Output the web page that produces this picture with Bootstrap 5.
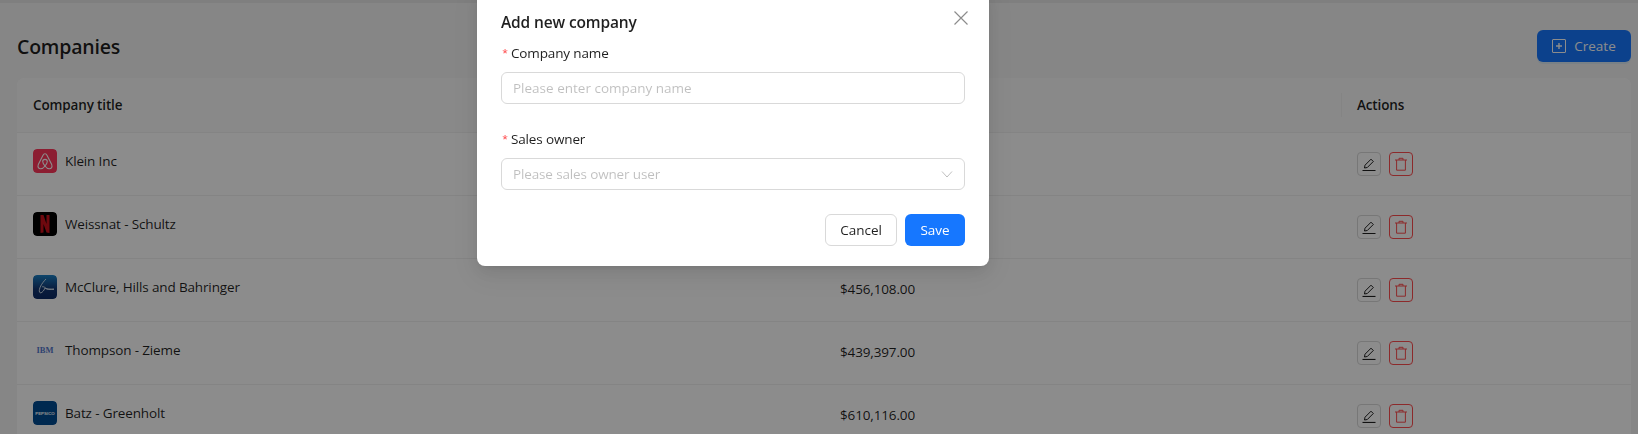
<!doctype html>
<html lang="en">
<head>
<meta charset="utf-8">
<title>Companies</title>
<link rel="stylesheet" href="https://cdn.jsdelivr.net/npm/bootstrap@5.3.0/dist/css/bootstrap.min.css">
<style>
html,body{height:434px;overflow:hidden}
body{background:#f5f5f5;font-family:"Open Sans","Noto Sans",sans-serif;font-size:13.5px;color:rgba(0,0,0,.88);letter-spacing:-.14px}
.page-wrap{padding:30px 7px 0 17px;height:434px;box-shadow:inset 0 3px 0 rgba(0,0,0,.05)}
.page-head{height:32px;margin-bottom:16px}
.page-title{font-size:19.5px;font-weight:600;margin:2px 0 0;line-height:32px;letter-spacing:-.2px}
.create-btn{width:94px;height:32px;background:#1677ff;color:#fff;border:0;border-radius:6px;font-size:13.5px;padding:0;box-shadow:0 2px 0 rgba(5,145,255,.1)}
.panel-box{background:#fff;border-radius:8px 8px 0 0;overflow:hidden}
.co-table{table-layout:fixed;width:100%;margin:0;font-size:13.5px}
.co-table>thead>tr>th{height:54px;background:#fafafa;font-weight:600;padding:0 16px;vertical-align:middle;border-bottom:1px solid #f0f0f0;position:relative;color:rgba(0,0,0,.88)}
.co-table>tbody>tr>td{height:63px;padding:0 16px;vertical-align:middle;border-bottom:1px solid #f0f0f0;color:rgba(0,0,0,.88);background:#fff}
.col-sep::before{content:"";position:absolute;left:0;top:15px;height:24px;width:1px;background:#f0f0f0}
.w-co{width:807px}.w-amt{width:517px}
.co-cell{margin-top:-5px}
.logo-box{width:24px;height:24px;border-radius:4px;flex:none;display:block}
.act-btn{width:24px;height:24px;padding:0;border-radius:4px;border:1px solid #d9d9d9;background:#fff;color:rgba(0,0,0,.88)}
.act-del{border-color:#ff4d4f;color:#ff4d4f}
.veil{position:fixed;inset:0;background:rgba(0,0,0,.45);z-index:10}
.dlg{position:fixed;left:477px;top:-16px;width:512px;height:282px;background:#fff;border-radius:8px;z-index:11;padding:16px 24px 20px;box-shadow:0 6px 16px rgba(0,0,0,.08),0 3px 6px -4px rgba(0,0,0,.12),0 9px 28px 8px rgba(0,0,0,.05)}
.dlg-title{font-size:15.5px;font-weight:600;line-height:22px;margin:11px 0 9px;color:rgba(0,0,0,.88)}
.dlg-close{position:absolute;right:18px;top:23px;width:20px;height:20px;padding:0;border:0;background:none;color:rgba(0,0,0,.45)}
.fld-label{display:block;height:22px;line-height:22px;margin-bottom:8px}
.fld-label-b{margin-top:-1px;margin-bottom:8px}
.req-mark{color:#ff4d4f;font-family:"Liberation Mono",monospace;margin-right:2px}
.fld-input{height:32px;border:1px solid #d9d9d9;border-radius:6px;padding:0 11px;font-size:13.5px;color:rgba(0,0,0,.88);box-shadow:none}
.fld-input::placeholder{color:rgba(0,0,0,.25)}
.fld-group{margin-bottom:25px}
.fld-select{height:32px;border:1px solid #d9d9d9;border-radius:6px;padding:0 11px;color:rgba(0,0,0,.25);background:#fff}
.dlg-foot{margin-top:24px}
.btn-cancel{width:72px;height:32px;padding:0;border:1px solid #d9d9d9;border-radius:6px;background:#fff;color:rgba(0,0,0,.88);font-size:13.5px}
.btn-save{width:60px;height:32px;padding:0;border:0;border-radius:6px;background:#1677ff;color:#fff;font-size:13.5px}
</style>
</head>
<body>
<main class="page-wrap">
  <div class="page-head d-flex justify-content-between align-items-center">
    <h1 class="page-title">Companies</h1>
    <button type="button" class="create-btn d-inline-flex align-items-center justify-content-center gap-2">
      <svg width="14" height="14" viewBox="0 0 14 14" fill="none" stroke="currentColor"><rect x=".5" y=".5" width="13" height="13" rx=".5"/><path d="M7 4v6M4 7h6" stroke-width="1.4"/></svg>
      Create
    </button>
  </div>
  <div class="panel-box">
    <table class="table co-table">
      <colgroup><col class="w-co"><col class="w-amt"><col></colgroup>
      <thead>
        <tr><th>Company title</th><th class="col-sep"></th><th class="col-sep">Actions</th></tr>
      </thead>
      <tbody>
        <tr>
          <td><div class="co-cell d-flex align-items-center gap-2">
            <svg class="logo-box" viewBox="0 0 24 24"><rect width="24" height="24" rx="4" fill="#ff385c"/><path d="M12 4.800c-1 0-1.600.7-2.100 1.700L5.300 15.600c-1 2.400.4 4.200 2.400 4.200 1.600 0 3-1 4.300-2.800 1.300 1.800 2.700 2.800 4.300 2.800 2 0 3.400-1.800 2.400-4.200L14.100 6.500C13.600 5.500 13 4.800 12 4.800zM12 17c-1.500-1.900-2.300-3.300-2.300-4.400 0-1.300 1-2.200 2.300-2.200s2.300.9 2.300 2.200c0 1.100-.8 2.500-2.300 4.400z" fill="none" stroke="#fff" stroke-width="1.100"/></svg>
            <span>Klein Inc</span></div></td>
          <td></td>
          <td><div class="d-flex gap-2">
            <button type="button" class="act-btn d-flex align-items-center justify-content-center" aria-label="Edit"><svg width="14" height="14" viewBox="0 0 14 14" fill="none" stroke="currentColor"><path d="M.5 13.500h13" stroke-width="1.200"/><path d="M2.500 11 3 8.200 9 2.200 11.300 4.500 5.300 10.500z"/></svg></button>
            <button type="button" class="act-btn act-del d-flex align-items-center justify-content-center" aria-label="Delete"><svg width="14" height="14" viewBox="0 0 14 14" fill="none" stroke="currentColor"><path d="M1 3h12M5 3V1.300h4V3M2.600 3v10.200h8.800V3"/></svg></button>
          </div></td>
        </tr>
        <tr>
          <td><div class="co-cell d-flex align-items-center gap-2">
            <svg class="logo-box" viewBox="0 0 24 24"><rect width="24" height="24" rx="4" fill="#000"/><path d="M7.500 3h3L13.500 12V3h3v18l-3-.5L10.500 12v8.500l-3 .5z" fill="#c8101a"/></svg>
            <span>Weissnat - Schultz</span></div></td>
          <td></td>
          <td><div class="d-flex gap-2">
            <button type="button" class="act-btn d-flex align-items-center justify-content-center" aria-label="Edit"><svg width="14" height="14" viewBox="0 0 14 14" fill="none" stroke="currentColor"><path d="M.5 13.500h13" stroke-width="1.200"/><path d="M2.500 11 3 8.200 9 2.200 11.300 4.500 5.300 10.500z"/></svg></button>
            <button type="button" class="act-btn act-del d-flex align-items-center justify-content-center" aria-label="Delete"><svg width="14" height="14" viewBox="0 0 14 14" fill="none" stroke="currentColor"><path d="M1 3h12M5 3V1.300h4V3M2.600 3v10.200h8.800V3"/></svg></button>
          </div></td>
        </tr>
        <tr>
          <td><div class="co-cell d-flex align-items-center gap-2">
            <svg class="logo-box" viewBox="0 0 24 24"><defs><linearGradient id="bg1" x1="0" y1="0" x2="0" y2="1"><stop offset="0" stop-color="#1a7fc4"/><stop offset=".6" stop-color="#12346f"/><stop offset="1" stop-color="#0b2a66"/></linearGradient></defs><rect width="24" height="24" rx="4" fill="url(#bg1)"/><path d="M13 4C8.500 8.500 5.500 14 6.500 17c1 2.500 4.500-1 5.500-4 1.500 1.800 5 1.200 9 1.200-3.500.1-7 .2-8.500-1.200-1.500-1.500-3-1.500-3.500-1" fill="none" stroke="#dce8f2" stroke-width=".9"/></svg>
            <span>McClure, Hills and Bahringer</span></div></td>
          <td>$456,108.00</td>
          <td><div class="d-flex gap-2">
            <button type="button" class="act-btn d-flex align-items-center justify-content-center" aria-label="Edit"><svg width="14" height="14" viewBox="0 0 14 14" fill="none" stroke="currentColor"><path d="M.5 13.500h13" stroke-width="1.200"/><path d="M2.500 11 3 8.200 9 2.200 11.300 4.500 5.300 10.500z"/></svg></button>
            <button type="button" class="act-btn act-del d-flex align-items-center justify-content-center" aria-label="Delete"><svg width="14" height="14" viewBox="0 0 14 14" fill="none" stroke="currentColor"><path d="M1 3h12M5 3V1.300h4V3M2.600 3v10.200h8.800V3"/></svg></button>
          </div></td>
        </tr>
        <tr>
          <td><div class="co-cell d-flex align-items-center gap-2">
            <svg class="logo-box" viewBox="0 0 24 24"><rect width="24" height="24" rx="4" fill="#fff"/><text x="12" y="15" text-anchor="middle" font-family="'Liberation Serif',serif" font-weight="700" font-size="8.500" fill="#5578cc" letter-spacing="0">IBM</text></svg>
            <span>Thompson - Zieme</span></div></td>
          <td>$439,397.00</td>
          <td><div class="d-flex gap-2">
            <button type="button" class="act-btn d-flex align-items-center justify-content-center" aria-label="Edit"><svg width="14" height="14" viewBox="0 0 14 14" fill="none" stroke="currentColor"><path d="M.5 13.500h13" stroke-width="1.200"/><path d="M2.500 11 3 8.200 9 2.200 11.300 4.500 5.300 10.500z"/></svg></button>
            <button type="button" class="act-btn act-del d-flex align-items-center justify-content-center" aria-label="Delete"><svg width="14" height="14" viewBox="0 0 14 14" fill="none" stroke="currentColor"><path d="M1 3h12M5 3V1.300h4V3M2.600 3v10.200h8.800V3"/></svg></button>
          </div></td>
        </tr>
        <tr>
          <td><div class="co-cell d-flex align-items-center gap-2">
            <svg class="logo-box" viewBox="0 0 24 24"><rect width="24" height="24" rx="4" fill="#004b93"/><text x="12" y="13.500" text-anchor="middle" font-family="'Liberation Sans',sans-serif" font-weight="700" font-size="4.400" fill="#fff" letter-spacing="0">PEPSICO</text></svg>
            <span>Batz - Greenholt</span></div></td>
          <td>$610,116.00</td>
          <td><div class="d-flex gap-2">
            <button type="button" class="act-btn d-flex align-items-center justify-content-center" aria-label="Edit"><svg width="14" height="14" viewBox="0 0 14 14" fill="none" stroke="currentColor"><path d="M.5 13.500h13" stroke-width="1.200"/><path d="M2.500 11 3 8.200 9 2.200 11.300 4.500 5.300 10.500z"/></svg></button>
            <button type="button" class="act-btn act-del d-flex align-items-center justify-content-center" aria-label="Delete"><svg width="14" height="14" viewBox="0 0 14 14" fill="none" stroke="currentColor"><path d="M1 3h12M5 3V1.300h4V3M2.600 3v10.200h8.800V3"/></svg></button>
          </div></td>
        </tr>
      </tbody>
    </table>
  </div>
</main>
<div class="veil"></div>
<div class="dlg" role="dialog" aria-label="Add new company">
  <button type="button" class="dlg-close" aria-label="Close"><svg width="20" height="20" viewBox="0 0 20 20" fill="none" stroke="currentColor" stroke-width="1.200"><path d="M3.500 3.500l13 13M16.500 3.500l-13 13"/></svg></button>
  <div class="dlg-title">Add new company</div>
  <div class="fld-group">
    <label class="fld-label"><span class="req-mark">*</span>Company name</label>
    <input class="form-control fld-input" placeholder="Please enter company name">
  </div>
  <div>
    <label class="fld-label fld-label-b"><span class="req-mark">*</span>Sales owner</label>
    <div class="fld-select d-flex align-items-center justify-content-between">
      <span>Please sales owner user</span>
      <svg width="12" height="12" viewBox="0 0 12 12" fill="none" stroke="currentColor"><path d="M1 3.500l5 5.500 5-5.500"/></svg>
    </div>
  </div>
  <div class="dlg-foot d-flex justify-content-end gap-2">
    <button type="button" class="btn-cancel">Cancel</button>
    <button type="button" class="btn-save">Save</button>
  </div>
</div>
<script src="https://cdn.jsdelivr.net/npm/bootstrap@5.3.0/dist/js/bootstrap.bundle.min.js"></script>
</body>
</html>
